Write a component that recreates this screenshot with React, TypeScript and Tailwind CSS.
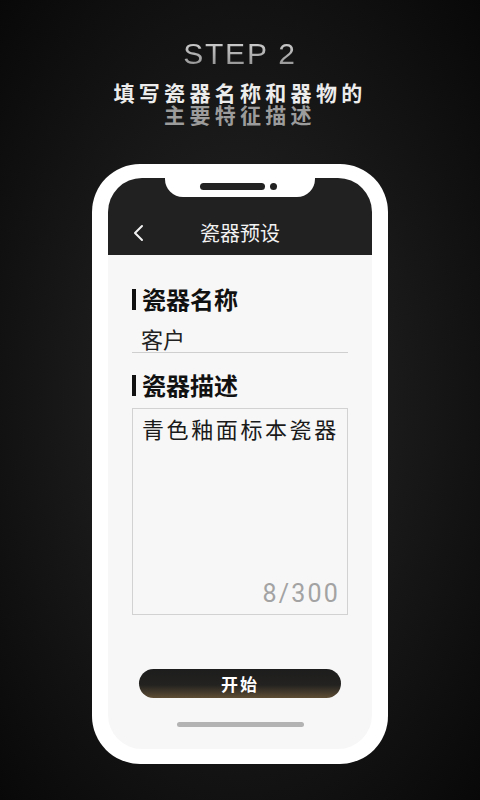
import React from 'react'

function BackIcon() {
  return (
    <svg width="12" height="18" viewBox="0 0 12 18" fill="none">
      <polyline points="10,2 3,9 10,16" stroke="#f2f2f2" strokeWidth="2" strokeLinecap="round" strokeLinejoin="round" />
    </svg>
  )
}

function SectionLabel({ text }: { text: string }) {
  return (
    <div className="flex items-center h-[24px]">
      <span className="w-[4px] h-[21px] bg-[#111]" />
      <span className="ml-[6px] text-[24px] leading-[24px] font-bold text-[#111]">{text}</span>
    </div>
  )
}

export default function App() {
  return (
    <div className="w-[480px] h-[800px] overflow-hidden flex flex-col items-center bg-[radial-gradient(ellipse_at_50%_50%,#2a2a2a_0%,#1a1a1a_45%,#080808_100%)] font-['Noto_Sans_CJK_SC',sans-serif]">
      <div className="pt-[39px] text-[30px] leading-[30px] tracking-[1.8px] font-['Liberation_Sans',sans-serif] bg-linear-to-b from-[#f4f4f4] via-[#e0e0e0] to-[#8e8e8e] bg-clip-text text-transparent">
        STEP 2
      </div>
      <div className="mt-[12px] text-center text-[21px] leading-[22px] font-bold tracking-[4.3px] text-[#ececec]">
        填写瓷器名称和器物的
        <br />
        <span className="text-[#9c9c9c]">主要特征描述</span>
      </div>

      {/* phone */}
      <div className="mt-[39px] w-[296px] h-[600px] bg-white rounded-[48px] px-[16px] pt-[14px] pb-[15px]">
        <div className="h-full rounded-[34px] overflow-hidden bg-[#f7f7f7] flex flex-col">
          <div className="relative h-[77px] bg-[#212121] shrink-0">
            <div className="absolute left-[57px] top-0 w-[150px] h-[19px] bg-white rounded-b-[18px]">
              <div className="absolute left-[35px] top-[5px] w-[65px] h-[7px] rounded-full bg-[#222]" />
              <div className="absolute left-[105px] top-[5px] w-[7px] h-[7px] rounded-full bg-[#222]" />
            </div>
            <div className="absolute left-[24px] top-[46px]">
              <BackIcon />
            </div>
            <div className="absolute left-0 right-0 top-[45px] text-center text-[20px] leading-[20px] text-[#f2f2f2]">
              瓷器预设
            </div>
          </div>

          <div className="flex-1 flex flex-col px-[24px] pt-[32px]">
            <SectionLabel text="瓷器名称" />
            <div className="mt-[16px] pl-[9px] pb-[3px] border-b border-[#cfcfcf] text-[22px] leading-[22px] text-[#222]">
              客户
            </div>
            <div className="mt-[20px]">
              <SectionLabel text="瓷器描述" />
            </div>
            <div className="mt-[11px] h-[207px] border border-[#d2d2d2] flex flex-col justify-between pt-[8px] pl-[9px] pr-[7px] pb-[8px]">
              <div className="text-[22px] leading-[22px] tracking-[2.6px] text-[#1a1a1a]">青色釉面标本瓷器</div>
              <div className="self-end font-['Roboto',sans-serif] text-[25px] leading-[25px] tracking-[2.2px] text-[#a3a3a3]">
                8/300
              </div>
            </div>
            <button className="mt-[54px] mx-auto w-[202px] h-[29px] rounded-full bg-[linear-gradient(to_bottom,#1d1d1d_0%,#232220_55%,#5e4e35_100%)] text-white text-[17px] leading-[17px] font-bold tracking-[2px]">
              开始
            </button>
            <div className="mt-[24px] mx-auto w-[127px] h-[5px] rounded-full bg-[#b3b3b3]" />
          </div>
        </div>
      </div>
    </div>
  )
}
